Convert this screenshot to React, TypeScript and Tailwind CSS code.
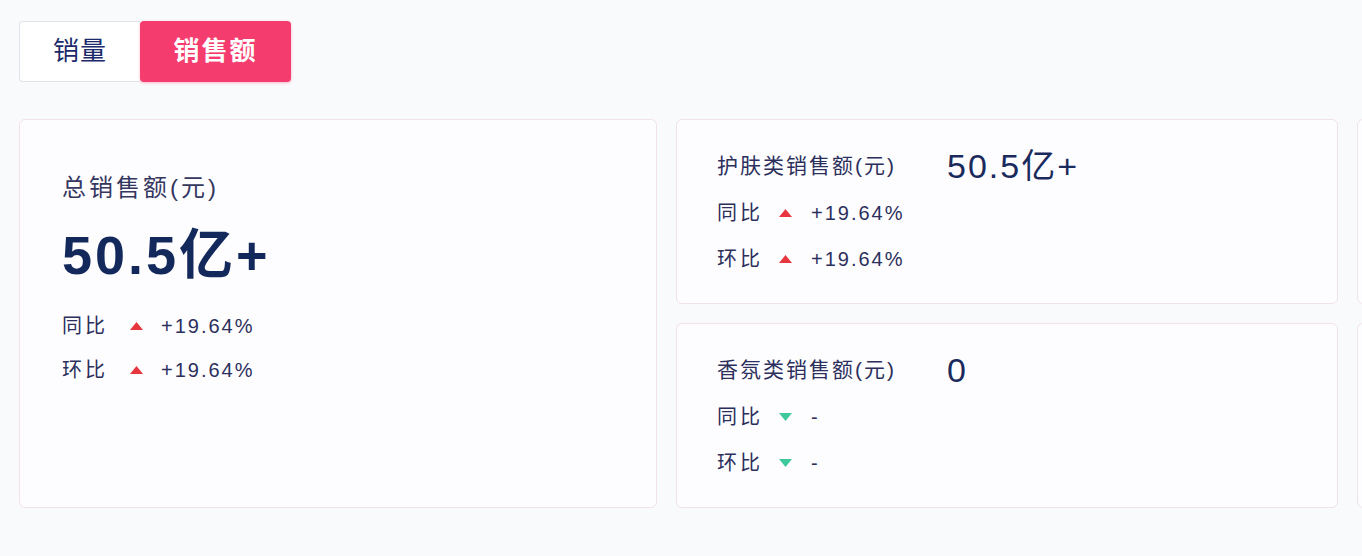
import React from 'react';

const font = { fontFamily: '"Liberation Sans", "Noto Sans CJK SC", sans-serif' };

type Trend = 'up' | 'down';

const Arrow: React.FC<{ trend: Trend }> = ({ trend }) =>
  trend === 'up' ? (
    <svg width="13" height="8" viewBox="0 0 13 8" className="shrink-0">
      <polygon points="6.5,0 13,8 0,8" fill="#e8363f" />
    </svg>
  ) : (
    <svg width="13" height="8" viewBox="0 0 13 8" className="shrink-0">
      <polygon points="0,0 13,0 6.5,8" fill="#3fc99b" />
    </svg>
  );

const Ratio: React.FC<{ label: string; trend: Trend; value: string; wide?: boolean }> = ({
  label,
  trend,
  value,
  wide,
}) => (
  <div className="flex items-center leading-[28px] text-[20px] text-[#2c2f5c]">
    <span className={`tracking-[3px] ${wide ? 'mr-[22px]' : 'mr-[16px]'}`}>{label}</span>
    <Arrow trend={trend} />
    <span className={`tracking-[2px] ${wide ? 'ml-[18px]' : 'ml-[19px]'}`}>{value}</span>
  </div>
);

interface SubStat {
  title: string;
  value: string;
  trend: Trend;
  yoy: string;
  mom: string;
}

const subStats: SubStat[] = [
  { title: '护肤类销售额(元)', value: '50.5亿+', trend: 'up', yoy: '+19.64%', mom: '+19.64%' },
  { title: '香氛类销售额(元)', value: '0', trend: 'down', yoy: '-', mom: '-' },
];

const SubCard: React.FC<{ stat?: SubStat }> = ({ stat }) => (
  <div className="h-[185px] rounded-[6px] border border-[#f1e2e9] bg-[#fdfdff] pl-[40px] pt-[32px]">
    {stat && (
      <>
        <div className="flex items-center">
          <span className="w-[230px] shrink-0 text-[21px] leading-[28px] tracking-[2px] text-[#2c2f5c]">
            {stat.title}
          </span>
          <span className="text-[34px] leading-[28px] tracking-[2px] text-[#1a2a5c]">{stat.value}</span>
        </div>
        <div className="mt-[19px] flex flex-col gap-[18px]">
          <Ratio label="同比" trend={stat.trend} value={stat.yoy} />
          <Ratio label="环比" trend={stat.trend} value={stat.mom} />
        </div>
      </>
    )}
  </div>
);

export default function App() {
  return (
    <div className="h-[556px] w-[1362px] overflow-hidden bg-[#f9fafc] pl-[19px] pt-[21px]" style={font}>
      {/* Tabs */}
      <div className="flex h-[61px]">
        <button className="flex w-[121px] items-center justify-center rounded-l-[4px] border border-r-0 border-[#dfe4ec] bg-white text-[26px] tracking-[1px] text-[#1c2a6b]">
          销量
        </button>
        <button className="flex w-[151px] items-center justify-center rounded-[4px] bg-[#f53c6e] text-[26px] font-bold tracking-[2px] text-white shadow-[0_1px_3px_rgba(245,60,110,0.35)]">
          销售额
        </button>
      </div>

      {/* Cards */}
      <div className="mt-[37px] grid grid-cols-[638px_662px_662px] gap-[19px]">
        <div className="h-[389px] rounded-[6px] border border-[#f1e2e9] bg-[#fdfdff] pl-[42px] pt-[52px]">
          <div className="text-[24px] leading-[32px] tracking-[3px] text-[#35375f]">总销售额(元)</div>
          <div className="mt-[21px] text-[54px] font-bold leading-[60px] tracking-[3px] text-[#14295b]">50.5亿+</div>
          <div className="mt-[27px] flex flex-col gap-[16px]">
            <Ratio label="同比" trend="up" value="+19.64%" wide />
            <Ratio label="环比" trend="up" value="+19.64%" wide />
          </div>
        </div>
        <div className="flex flex-col gap-[19px]">
          {subStats.map((s) => (
            <SubCard key={s.title} stat={s} />
          ))}
        </div>
        <div className="flex flex-col gap-[19px]">
          <SubCard />
          <SubCard />
        </div>
      </div>
    </div>
  );
}
